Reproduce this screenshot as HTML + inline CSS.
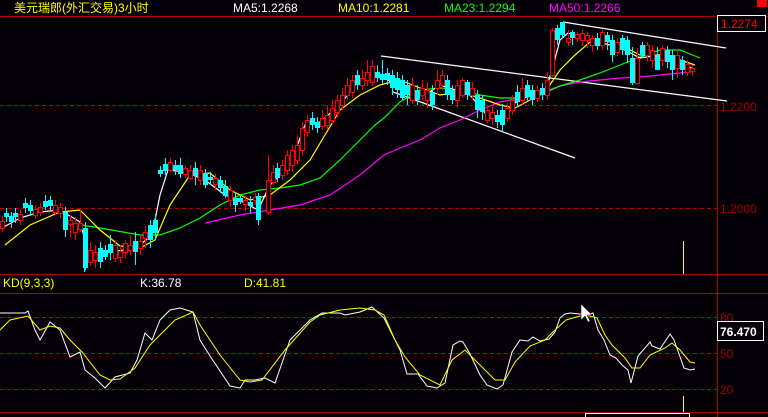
<!DOCTYPE html>
<html><head><meta charset="utf-8"><style>
html,body{margin:0;padding:0;background:#050008;width:768px;height:417px;overflow:hidden}
svg{display:block}
text{font-family:"Liberation Sans","Noto Sans CJK SC",sans-serif;font-size:12px}
</style></head><body>
<svg width="768" height="417" viewBox="0 0 768 417" xmlns="http://www.w3.org/2000/svg">
<rect width="768" height="417" fill="#050008"/>
<text x="14" y="12" fill="#ffff00" font-size="13">美元瑞郎(外汇交易)3小时</text>
<text x="233" y="12" fill="#ffffff">MA5:1.2268</text>
<text x="338" y="12" fill="#ffff00">MA10:1.2281</text>
<text x="444" y="12" fill="#00ff00">MA23:1.2294</text>
<text x="549" y="12" fill="#ff00ff">MA50:1.2266</text>
<rect x="757" y="0" width="10" height="7" fill="#ff0000"/>
<g stroke="#b00000" stroke-width="1" fill="none">
<line x1="0" y1="16.5" x2="768" y2="16.5"/>
<line x1="717.5" y1="16" x2="717.5" y2="417"/>
<line x1="0" y1="274.5" x2="768" y2="274.5"/>
<line x1="0" y1="293.5" x2="768" y2="293.5"/>
<line x1="0" y1="412.5" x2="768" y2="412.5"/>
</g>
<g stroke="#c00000" stroke-width="1" stroke-dasharray="4,3">
<line x1="0" y1="105.5" x2="717" y2="105.5"/>
<line x1="0" y1="208.5" x2="717" y2="208.5"/>
<line x1="0" y1="317.5" x2="717" y2="317.5"/>
<line x1="0" y1="353.5" x2="717" y2="353.5"/>
<line x1="0" y1="389.5" x2="717" y2="389.5"/>
</g>
<rect x="717.5" y="15.5" width="48" height="16" fill="#050008" stroke="#ffffff"/>
<text x="721" y="28" fill="#ff0000">1.2274</text>
<text x="720" y="111" fill="#a00000">1.2200</text>
<text x="720" y="213" fill="#a00000">1.2000</text>
<text x="720" y="322" fill="#a00000">80</text>
<text x="720" y="358" fill="#a00000">50</text>
<text x="720" y="394" fill="#a00000">20</text>
<rect x="717.5" y="321.5" width="46" height="19" fill="#050008" stroke="#ffffff"/>
<text x="720" y="336" fill="#ffffff" font-weight="bold" font-size="13">76.470</text>
<text x="3" y="287" fill="#ffff00">KD(9,3,3)</text>
<text x="140" y="287" fill="#ffffff">K:36.78</text>
<text x="244" y="287" fill="#ffff00">D:41.81</text>
<line x1="683.5" y1="241" x2="683.5" y2="274" stroke="#ffff00"/>
<line x1="683.5" y1="396" x2="683.5" y2="412" stroke="#ffff00"/>
<rect x="585.5" y="413.5" width="104" height="5" fill="none" stroke="#ffffff"/>
<g stroke="#ffffff" stroke-width="1.2">
<line x1="381" y1="56" x2="727" y2="101"/>
<line x1="393" y1="92" x2="575" y2="158"/>
<line x1="563" y1="22" x2="726" y2="48"/>
</g>
<polyline fill="none" stroke="#ff00ff" stroke-width="1.2" points="205,223 240,215 270,210 300,205 330,195 360,175 384,155 400,148 420,140 440,128 460,120 480,110 500,102 520,98 540,93 560,86 580,82 600,80 620,78 640,77 660,75 680,73 695,71"/>
<polyline fill="none" stroke="#00ff00" stroke-width="1.2" points="70,223 100,228 140,235 160,235 180,228 200,218 220,205 240,195 260,190 280,188 300,185 320,178 340,160 360,140 375,125 384,118 400,102 420,90 440,88 460,90 480,95 500,98 520,98 540,95 560,86 580,80 600,73 620,65 640,57 660,50 680,50 700,58"/>
<polyline fill="none" stroke="#ffff00" stroke-width="1.2" points="5,245 30,225 60,212 80,210 100,230 120,246 140,248 155,240 170,205 190,175 210,173 230,190 250,200 270,195 290,180 310,160 325,135 340,110 360,95 380,85 400,80 420,88 440,95 460,92 480,98 500,105 515,108 530,100 545,92 560,70 575,55 590,42 600,40 615,43 630,50 640,55 660,55 680,60 695,65"/>
<polyline fill="none" stroke="#ffffff" stroke-width="1.2" points="2,228 20,218 40,212 60,210 80,222 90,258 105,252 125,250 140,245 152,235 160,195 168,170 185,172 205,180 225,195 245,203 258,210 270,185 290,165 305,125 320,122 340,105 355,85 372,76 385,77 397,88 410,95 425,95 440,85 455,90 470,95 485,113 500,118 515,103 530,95 545,92 552,70 560,40 568,33 590,40 610,45 625,50 640,58 660,55 680,62 695,70"/>
<g stroke-width="1">
<path stroke="#ff0000" fill="none" d="M2.5,216V232M20.5,210V225M35.5,205V219M40.5,203V216M55.5,200V215M60.5,203V218M70.5,215V237M75.5,217V240M80.5,210V232M90.5,242V266M95.5,245V268M115.5,240V262M120.5,245V263M125.5,240V258M130.5,235V255M140.5,235V255M145.5,226V248M170.5,158V172M185.5,165V178M190.5,165V180M200.5,165V185M215.5,174V190M230.5,186V207M245.5,196V211M255.5,193V205M268.5,155V215M273.5,165V185M282.5,160V180M287.5,150V175M292.5,145V172M297.5,135V165M302.5,122V155M307.5,115V137M322.5,110V130M327.5,105V130M332.5,100V125M337.5,95V117M342.5,88V110M347.5,78V100M352.5,75V98M362.5,70V90M367.5,60V86M372.5,60V86M412.5,78V104M422.5,80V100M427.5,82V108M437.5,70V95M442.5,70V90M457.5,80V108M462.5,78V98M472.5,82V100M487.5,105V123M492.5,105V125M507.5,103V122M512.5,95V115M522.5,78V105M537.5,85V102M547.5,72V100M552.5,28V78M568.5,30V46M577.5,32V42M582.5,30V46M587.5,32V48M592.5,35V52M602.5,30V50M617.5,38V56M637.5,48V85M647.5,42V62M652.5,45V68M662.5,45V66M677.5,50V78M687.5,60V76M692.5,65V76"/>
<g fill="#050008" stroke="#ff0000">
<rect x="0.5" y="221.5" width="4" height="7"/><rect x="18.5" y="214.5" width="4" height="6"/><rect x="33.5" y="209.5" width="4" height="6"/><rect x="38.5" y="207.5" width="4" height="5"/><rect x="53.5" y="205.5" width="4" height="7"/><rect x="58.5" y="207.5" width="4" height="6"/><rect x="68.5" y="220.5" width="4" height="4"/><rect x="73.5" y="223.5" width="4" height="9"/><rect x="78.5" y="223.5" width="4" height="6"/><rect x="88.5" y="250.5" width="4" height="12"/><rect x="93.5" y="252.5" width="4" height="8"/><rect x="113.5" y="245.5" width="4" height="13"/><rect x="118.5" y="251.5" width="4" height="6"/><rect x="123.5" y="243.5" width="4" height="9"/><rect x="128.5" y="245.5" width="4" height="5"/><rect x="138.5" y="241.5" width="4" height="7"/><rect x="143.5" y="232.5" width="4" height="6"/><rect x="168.5" y="162.5" width="4" height="8"/><rect x="183.5" y="168.5" width="4" height="6"/><rect x="188.5" y="170.5" width="4" height="8"/><rect x="198.5" y="170.5" width="4" height="10"/><rect x="213.5" y="178.5" width="4" height="6"/><rect x="228.5" y="190.5" width="4" height="10"/><rect x="243.5" y="200.5" width="4" height="4"/><rect x="253.5" y="197.5" width="4" height="3"/><rect x="266.5" y="180.5" width="4" height="32"/><rect x="271.5" y="172.5" width="4" height="10"/><rect x="280.5" y="165.5" width="4" height="10"/><rect x="285.5" y="155.5" width="4" height="15"/><rect x="290.5" y="150.5" width="4" height="15"/><rect x="295.5" y="145.5" width="4" height="15"/><rect x="300.5" y="128.5" width="4" height="22"/><rect x="305.5" y="120.5" width="4" height="12"/><rect x="320.5" y="118.5" width="4" height="8"/><rect x="325.5" y="115.5" width="4" height="10"/><rect x="330.5" y="108.5" width="4" height="12"/><rect x="335.5" y="100.5" width="4" height="12"/><rect x="340.5" y="95.5" width="4" height="10"/><rect x="345.5" y="85.5" width="4" height="10"/><rect x="350.5" y="80.5" width="4" height="12"/><rect x="360.5" y="78.5" width="4" height="7"/><rect x="365.5" y="72.5" width="4" height="8"/><rect x="370.5" y="66.5" width="4" height="16"/><rect x="410.5" y="85.5" width="4" height="15"/><rect x="420.5" y="88.5" width="4" height="7"/><rect x="425.5" y="90.5" width="4" height="10"/><rect x="435.5" y="80.5" width="4" height="8"/><rect x="440.5" y="75.5" width="4" height="10"/><rect x="455.5" y="85.5" width="4" height="15"/><rect x="460.5" y="80.5" width="4" height="15"/><rect x="470.5" y="88.5" width="4" height="7"/><rect x="485.5" y="110.5" width="4" height="10"/><rect x="490.5" y="112.5" width="4" height="6"/><rect x="505.5" y="108.5" width="4" height="10"/><rect x="510.5" y="100.5" width="4" height="10"/><rect x="520.5" y="88.5" width="4" height="12"/><rect x="535.5" y="90.5" width="4" height="8"/><rect x="545.5" y="80.5" width="4" height="15"/><rect x="550.5" y="30.5" width="4" height="45"/><rect x="566.5" y="38.5" width="4" height="4"/><rect x="575.5" y="34.5" width="4" height="4"/><rect x="580.5" y="33.5" width="4" height="7"/><rect x="585.5" y="35.5" width="4" height="5"/><rect x="590.5" y="38.5" width="4" height="7"/><rect x="600.5" y="32.5" width="4" height="13"/><rect x="615.5" y="42.5" width="4" height="10"/><rect x="635.5" y="58.5" width="4" height="25"/><rect x="645.5" y="45.5" width="4" height="10"/><rect x="650.5" y="50.5" width="4" height="10"/><rect x="660.5" y="48.5" width="4" height="12"/><rect x="675.5" y="55.5" width="4" height="13"/><rect x="685.5" y="64.5" width="4" height="8"/><rect x="690.5" y="68.5" width="4" height="3"/>
</g>
<path stroke="#00ffff" fill="none" d="M6.5,208V222M11.5,212V228M15.5,208V223M25.5,198V213M30.5,200V215M45.5,195V210M50.5,196V210M65.5,207V237M85.5,222V270M100.5,242V268M105.5,245V260M110.5,235V260M135.5,232V265M150.5,220V248M155.5,214V240M160.5,166V177M165.5,158V175M175.5,160V175M180.5,158V178M195.5,162V185M205.5,169V188M210.5,172V185M220.5,176V193M225.5,180V198M235.5,192V212M240.5,195V204M250.5,196V213M258.5,193V225M277.5,163V182M312.5,112V130M317.5,117V133M357.5,70V90M377.5,65V82M382.5,60V84M387.5,68V85M392.5,70V95M397.5,72V98M402.5,75V100M407.5,80V105M417.5,85V105M432.5,85V110M447.5,75V100M452.5,85V104M467.5,80V100M477.5,90V118M482.5,95V120M497.5,110V128M502.5,104V132M517.5,85V107M527.5,80V102M532.5,85V105M542.5,83V100M557.5,25V45M562.5,22V38M572.5,30V45M597.5,33V50M607.5,32V50M612.5,35V62M622.5,35V55M627.5,36V63M632.5,47V85M642.5,42V58M657.5,47V70M667.5,46V68M672.5,50V80M682.5,56V75"/>
<g fill="#00ffff">
<rect x="4" y="213" width="5" height="4"/><rect x="9" y="216" width="5" height="6"/><rect x="13" y="213" width="5" height="4"/><rect x="23" y="203" width="5" height="5"/><rect x="28" y="205" width="5" height="6"/><rect x="43" y="201" width="5" height="6"/><rect x="48" y="200" width="5" height="6"/><rect x="63" y="212" width="5" height="18"/><rect x="83" y="228" width="5" height="40"/><rect x="98" y="248" width="5" height="14"/><rect x="103" y="250" width="5" height="7"/><rect x="108" y="244" width="5" height="9"/><rect x="133" y="241" width="5" height="11"/><rect x="148" y="225" width="5" height="15"/><rect x="153" y="220" width="5" height="13"/><rect x="158" y="170" width="5" height="4"/><rect x="163" y="164" width="5" height="7"/><rect x="173" y="165" width="5" height="5"/><rect x="178" y="165" width="5" height="9"/><rect x="193" y="168" width="5" height="8"/><rect x="203" y="173" width="5" height="12"/><rect x="208" y="177" width="5" height="3"/><rect x="218" y="180" width="5" height="8"/><rect x="223" y="186" width="5" height="10"/><rect x="233" y="198" width="5" height="7"/><rect x="238" y="198" width="5" height="4"/><rect x="248" y="202" width="5" height="4"/><rect x="256" y="196" width="5" height="24"/><rect x="275" y="168" width="5" height="10"/><rect x="310" y="118" width="5" height="7"/><rect x="315" y="122" width="5" height="6"/><rect x="355" y="75" width="5" height="10"/><rect x="375" y="72" width="5" height="6"/><rect x="380" y="74" width="5" height="6"/><rect x="385" y="73" width="5" height="7"/><rect x="390" y="75" width="5" height="13"/><rect x="395" y="78" width="5" height="12"/><rect x="400" y="80" width="5" height="18"/><rect x="405" y="85" width="5" height="10"/><rect x="415" y="90" width="5" height="10"/><rect x="430" y="92" width="5" height="13"/><rect x="445" y="80" width="5" height="15"/><rect x="450" y="90" width="5" height="10"/><rect x="465" y="82" width="5" height="13"/><rect x="475" y="95" width="5" height="15"/><rect x="480" y="100" width="5" height="12"/><rect x="495" y="115" width="5" height="7"/><rect x="500" y="110" width="5" height="15"/><rect x="515" y="92" width="5" height="10"/><rect x="525" y="85" width="5" height="12"/><rect x="530" y="90" width="5" height="10"/><rect x="540" y="88" width="5" height="7"/><rect x="555" y="28" width="5" height="12"/><rect x="560" y="22" width="5" height="13"/><rect x="570" y="32" width="5" height="6"/><rect x="595" y="38" width="5" height="8"/><rect x="605" y="35" width="5" height="7"/><rect x="610" y="40" width="5" height="15"/><rect x="620" y="38" width="5" height="12"/><rect x="625" y="40" width="5" height="15"/><rect x="630" y="58" width="5" height="25"/><rect x="640" y="45" width="5" height="10"/><rect x="655" y="55" width="5" height="15"/><rect x="665" y="50" width="5" height="12"/><rect x="670" y="55" width="5" height="15"/><rect x="680" y="60" width="5" height="10"/>
</g>
</g>
<line x1="84.5" y1="268" x2="84.5" y2="272" stroke="#00ffff"/>
<polyline fill="none" stroke="#ffffff" stroke-width="1" points="0,313 10,313 25,313 28,311 35,330 40,340 50,322 60,330 70,357 80,352 85,370 95,378 105,388 115,377 130,373 137,360 145,333 152,340 160,320 170,310 180,308 193,312 200,340 210,356 230,386 240,388 245,380 255,380 265,378 275,383 290,340 310,320 322,313 340,313 345,315 360,312 372,307 384,318 390,330 400,350 407,374 418,374 427,386 437,388 445,383 453,345 460,341 463,342 470,354 480,375 487,385 497,389 503,385 512,352 520,340 528,341 533,337 540,341 549,339 555,332 560,318 565,314 570,313 580,314 587,315 593,313 598,330 604,340 610,355 616,358 622,365 628,370 631,383 638,356 650,342 652,346 660,349 670,334 674,340 684,368 690,370 695,369"/>
<polyline fill="none" stroke="#ffff00" stroke-width="1" points="0,330 10,320 28,316 40,330 50,326 60,328 70,340 82,352 100,375 110,380 120,379 135,368 150,345 160,335 175,320 193,312 200,325 220,355 240,380 250,382 262,380 285,350 310,322 320,315 340,310 360,308 375,310 384,315 395,340 405,357 420,375 440,385 452,360 465,350 480,365 495,380 505,380 515,362 530,346 545,340 555,330 566,320 580,316 590,316 597,318 605,335 612,345 625,358 632,368 640,368 650,355 665,348 672,343 680,350 690,362 695,363"/>
<path d="M581,304 L581,320 L585,316 L588,322 L590,321 L587,315 L592,315 Z" fill="#ffffff" stroke="#000" stroke-width="0.5"/>
</svg>
</body></html>
